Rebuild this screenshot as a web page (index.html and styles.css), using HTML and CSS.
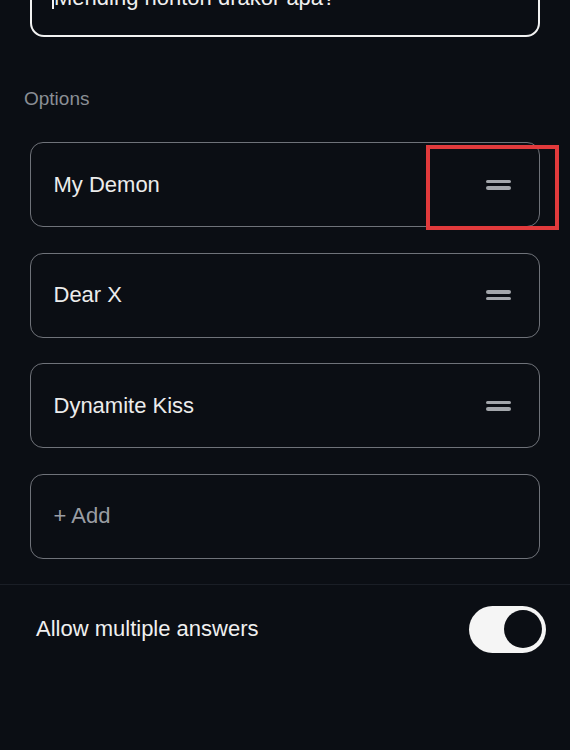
FILE: index.html
```html
<!DOCTYPE html>
<html>
<head>
<meta charset="utf-8">
<link rel="stylesheet" href="styles.css">
</head>
<body>
<div class="page">
  <div class="question"><span class="caret"></span>Mending nonton drakor apa?</div>
  <div class="label">Options</div>
  <div class="options">
    <div class="option">
      <span class="option-text">My Demon</span>
      <span class="handle"><i></i><i></i></span>
      <span class="highlight"></span>
    </div>
    <div class="option">
      <span class="option-text">Dear X</span>
      <span class="handle"><i></i><i></i></span>
    </div>
    <div class="option">
      <span class="option-text">Dynamite Kiss</span>
      <span class="handle"><i></i><i></i></span>
    </div>
    <div class="option add">
      <span class="option-text">+ Add</span>
    </div>
  </div>
  <div class="divider"></div>
  <div class="setting">
    <span class="setting-text">Allow multiple answers</span>
    <span class="toggle"><span class="knob"></span></span>
  </div>
</div>
</body>
</html>
```

FILE: styles.css
```css
html, body {
  margin: 0;
  padding: 0;
  background: #0b0e14;
  height: 100%;
  overflow: hidden;
}
.page {
  font-family: "Liberation Sans", Arial, sans-serif;
  color: #ececec;
}
.question {
  margin: -40px 30px 0 30px;
  height: 72px;
  box-sizing: border-box;
  height: 77px;
  border: 2.5px solid #f2f2f2;
  border-radius: 14px;
  padding: 23px 0 0 20px;
  font-size: 22px;
  line-height: 26px;
  display: flex;
  align-items: flex-start;
  color: #f0f0f0;
}
.caret {
  display: inline-block;
  width: 2px;
  height: 24px;
  background: #f0f0f0;
  margin-right: 0px;
}
.label {
  margin: 51px 0 0 24px;
  font-size: 19px;
  line-height: 22px;
  color: #8a8e95;
}
.options {
  margin: 32px 30px 0 30px;
  display: flex;
  flex-direction: column;
  gap: 25.5px;
}
.option {
  position: relative;
  height: 85px;
  box-sizing: border-box;
  border: 1.5px solid #6f7279;
  border-radius: 13px;
  display: flex;
  align-items: center;
  justify-content: space-between;
  padding: 0 28px 0 22.5px;
}
.option-text {
  font-size: 22px;
  color: #ececec;
}
.add .option-text {
  color: #9a9da3;
}
.handle {
  display: flex;
  flex-direction: column;
  gap: 3px;
  width: 25px;
}
.handle i {
  display: block;
  height: 3.5px;
  border-radius: 2px;
  background: #a3a6ab;
}
.highlight {
  position: absolute;
  left: 395px;
  top: 2px;
  width: 133px;
  height: 85px;
  box-sizing: border-box;
  border: 4px solid #e23a3c;
}
.divider {
  margin-top: 25px;
  height: 1px;
  background: #1a1e26;
}
.setting {
  display: flex;
  align-items: center;
  justify-content: space-between;
  margin-top: 21px;
  padding: 0 24px 0 36px;
}
.setting-text {
  font-size: 22px;
  color: #f0f0f0;
}
.toggle {
  width: 77px;
  height: 47px;
  border-radius: 24px;
  background: #f5f5f5;
  display: flex;
  align-items: center;
  justify-content: flex-end;
  padding-right: 4px;
  box-sizing: border-box;
}
.knob {
  width: 38px;
  height: 38px;
  border-radius: 50%;
  background: #0b0e14;
}
```
